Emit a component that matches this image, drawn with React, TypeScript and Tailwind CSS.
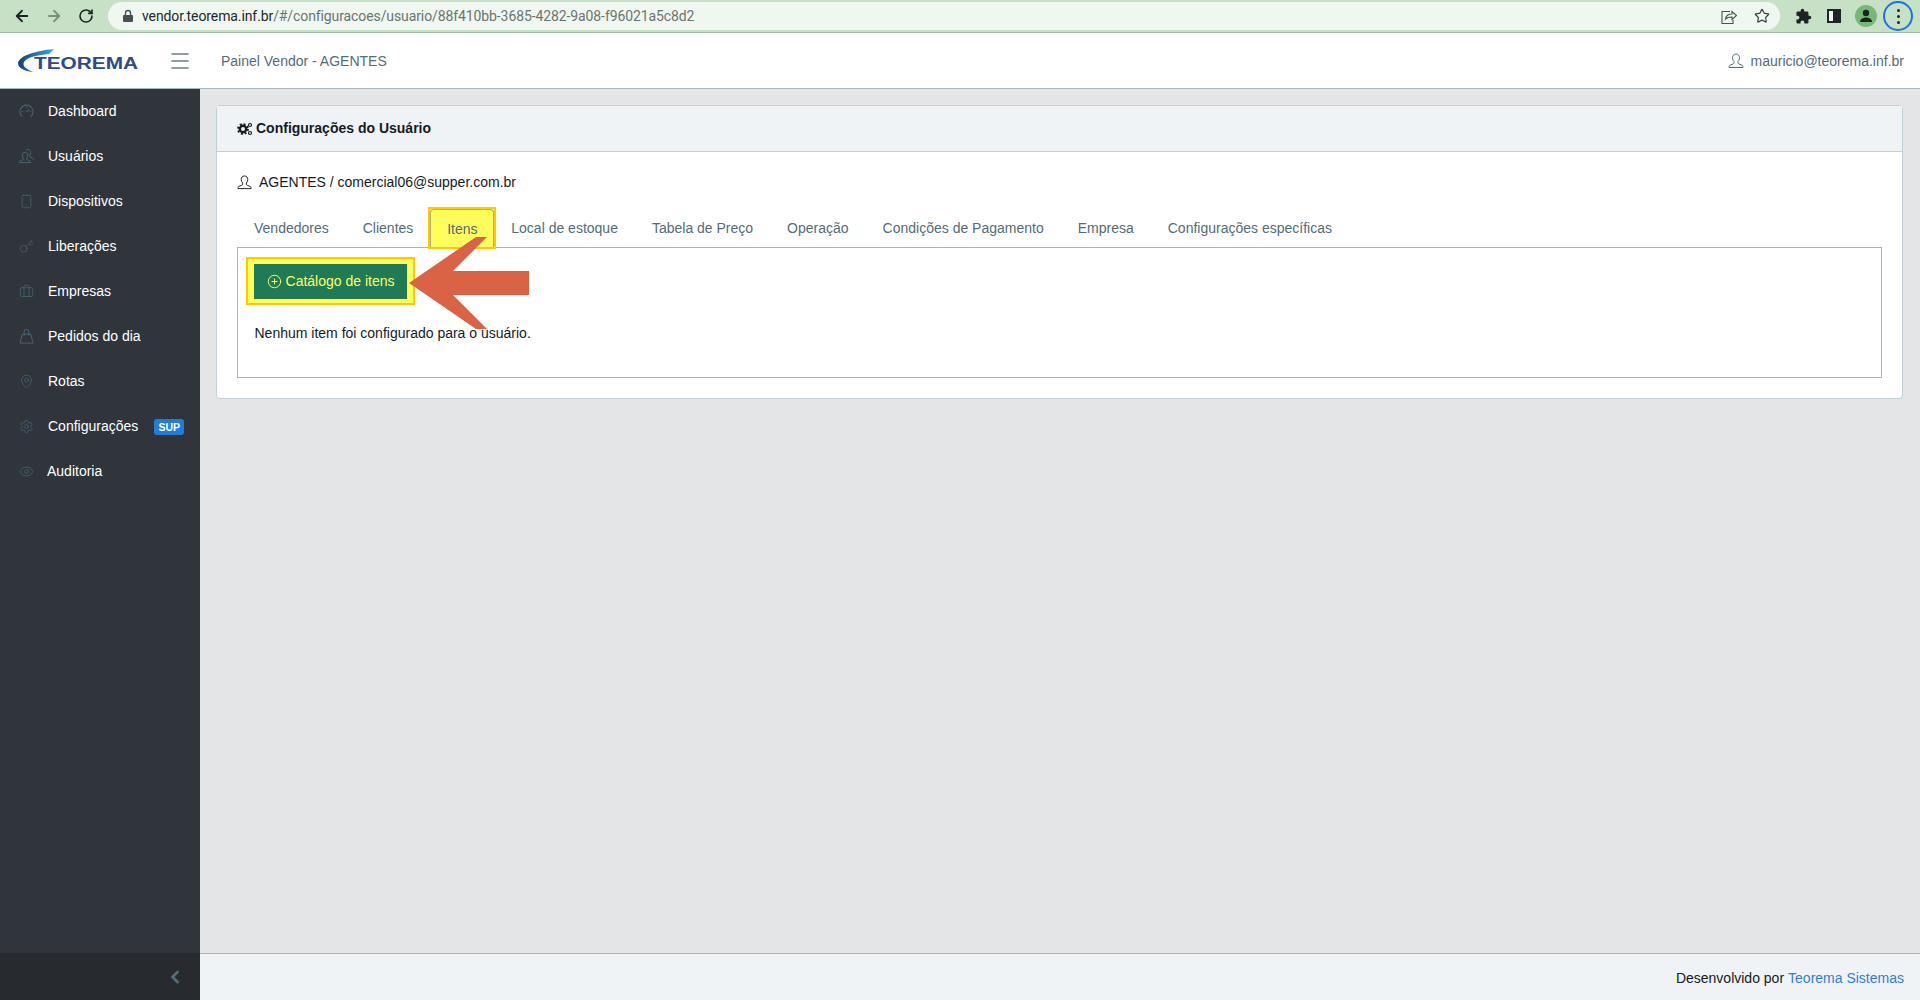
import {
  ArrowLeft,
  ArrowRight,
  Briefcase,
  ChevronLeft,
  Eye,
  Key,
  MapPin,
  Menu,
  PlusCircle,
  RotateCw,
  Settings,
  Smartphone,
  Star,
} from "lucide-react";

const UserLine = ({ size = 15, className = "" }: { size?: number; className?: string }) => (
  <svg width={size} height={size} viewBox="0 0 16 16" fill="none" stroke="currentColor" strokeWidth="1" className={className}>
    <path d="M8 1c-2.200 0-3.500 1.600-3.500 3.800 0 1.500.6 2.900 1.500 3.700v1.300c0 .6-.4 1-1 1.200l-2.700 1c-1 .4-1.300 1-1.300 2.500h14c0-1.500-.3-2.100-1.300-2.500l-2.700-1c-.6-.2-1-.6-1-1.200V8.500c.9-.8 1.500-2.200 1.500-3.700C11.500 2.600 10.200 1 8 1z" />
  </svg>
);

const UsersLine = ({ size = 15, className = "" }: { size?: number; className?: string }) => (
  <svg width={size} height={size} viewBox="0 0 16 16" fill="none" stroke="currentColor" strokeWidth="1" className={className}>
    <path d="M6.500 3.500c-1.800 0-3 1.400-3 3.200 0 1.200.5 2.300 1.200 3v1c0 .5-.3.8-.8 1l-2.200.8c-.9.3-1.200.9-1.200 2h12c0-1.100-.3-1.700-1.200-2l-2.200-.8c-.5-.2-.8-.5-.8-1v-1c.7-.7 1.200-1.800 1.200-3 0-1.800-1.200-3.200-3-3.200z" />
    <path d="M7.500 1.200c.6-.4 1.200-.7 2-.7 1.800 0 3 1.400 3 3.200 0 1.200-.5 2.300-1.200 3v1c0 .5.3.8.8 1l2.200.8c.9.3 1.200.9 1.200 2" />
  </svg>
);

const GaugeLine = ({ size = 15, className = "" }: { size?: number; className?: string }) => (
  <svg width={size} height={size} viewBox="0 0 16 16" fill="none" stroke="currentColor" strokeWidth="1.100" className={className}>
    <path d="M3.500 13.500a7 7 0 1 1 9 0" />
    <path d="M8 8.500l3-2.500" />
    <path d="M8 3v1M3 8h1M12 8h1" />
  </svg>
);

const BagLine = ({ size = 15, className = "" }: { size?: number; className?: string }) => (
  <svg width={size} height={size} viewBox="0 0 16 16" fill="none" stroke="currentColor" strokeWidth="1" className={className}>
    <path d="M3.500 5.500h9L15 15H1z" />
    <path d="M5.500 7V3a2.500 2.500 0 0 1 5 0v4" />
  </svg>
);

const menu = [
  { label: "Dashboard", icon: GaugeLine },
  { label: "Usuários", icon: UsersLine },
  { label: "Dispositivos", icon: Smartphone },
  { label: "Liberações", icon: Key },
  { label: "Empresas", icon: Briefcase },
  { label: "Pedidos do dia", icon: BagLine },
  { label: "Rotas", icon: MapPin },
  { label: "Configurações", icon: Settings, badge: "SUP" },
  { label: "Auditoria", icon: Eye },
];

const tabs = [
  "Vendedores",
  "Clientes",
  "Itens",
  "Local de estoque",
  "Tabela de Preço",
  "Operação",
  "Condições de Pagamento",
  "Empresa",
  "Configurações específicas",
];

// browser chrome at the top of the capture
const BrowserBar = () => (
  <div className="flex h-[33px] shrink-0 items-center border-b border-[#a3bba3] bg-[#c6e1c6]">
    <div className="flex w-[108px] items-center pl-[13px] text-[#1f2326]">
      <ArrowLeft size={18} strokeWidth={2.4} />
      <ArrowRight size={18} strokeWidth={2.4} className="ml-[14px] text-[#7d8f7d]" />
      <RotateCw size={16} strokeWidth={2.4} className="ml-[15px]" />
    </div>
    <div className="flex h-[28px] w-[1672px] items-center rounded-full bg-[#f0f7f0] pl-[14px] pr-[10px]">
      <svg width="12" height="14" viewBox="0 0 12 14" className="text-[#4a4f52]">
        <path d="M2 6h8a1 1 0 0 1 1 1v5a1 1 0 0 1-1 1H2a1 1 0 0 1-1-1V7a1 1 0 0 1 1-1z" fill="currentColor" />
        <path d="M3.500 6V4a2.500 2.500 0 0 1 5 0v2" fill="none" stroke="currentColor" strokeWidth="1.400" />
      </svg>
      <span className="ml-[8px] flex-1 font-['Roboto',sans-serif] text-[14px] tracking-[-0.1px] text-[#6c7470]">
        <span className="text-[#24282b]">vendor.teorema.inf.br</span>
        /#/configuracoes/usuario/88f410bb-3685-4282-9a08-f96021a5c8d2
      </span>
      <svg width="16" height="15" viewBox="0 0 16 15" fill="none" stroke="#4a4f52" strokeWidth="1.100" className="mr-[17px]">
        <path d="M9 2.500H1v12h11V11" />
        <path d="M4.500 10c.5-3.500 3-5 6.500-5V2.500L15.500 6.500 11 10.500V8c-2.800 0-5 .5-6.500 2z" />
      </svg>
      <Star size={16} strokeWidth={1.800} className="text-[#3c4043]" />
    </div>
    <svg width="17" height="17" viewBox="0 0 24 24" className="ml-[15px] text-[#1f2326]">
      <path
        d="M20.500 11H19V7a2 2 0 0 0-2-2h-4V3.500a2.500 2.500 0 0 0-5 0V5H4a2 2 0 0 0-2 2v3.800h1.500a2.700 2.700 0 0 1 0 5.400H2V20a2 2 0 0 0 2 2h3.800v-1.500a2.700 2.700 0 0 1 5.400 0V22H17a2 2 0 0 0 2-2v-4h1.500a2.500 2.500 0 0 0 0-5z"
        fill="currentColor"
      />
    </svg>
    <div className="ml-[15px] flex h-[14px] w-[14px] justify-end border-2 border-[#1f2326] bg-[#f0f7f0]">
      <div className="h-full w-[6px] bg-[#1f2326]" />
    </div>
    <div className="ml-[14px] flex h-[22px] w-[22px] items-center justify-center overflow-hidden rounded-full bg-[#79b779]">
      <svg width="14" height="14" viewBox="0 0 14 14" className="text-[#16261a]">
        <circle cx="7" cy="4" r="3.200" fill="currentColor" />
        <path d="M1 13c0-3 3-4.500 6-4.500s6 1.500 6 4.500z" fill="currentColor" />
      </svg>
    </div>
    <div className="ml-[6px] flex h-[30px] w-[30px] flex-col items-center justify-center gap-[3px] rounded-full border-2 border-[#1a73e8]">
      <div className="h-[3px] w-[3px] rounded-full bg-[#1f2326]" />
      <div className="h-[3px] w-[3px] rounded-full bg-[#1f2326]" />
      <div className="h-[3px] w-[3px] rounded-full bg-[#1f2326]" />
    </div>
  </div>
);

const Logo = () => (
  <div className="relative h-[24px] w-[121px]">
    <svg width="50" height="24" viewBox="0 0 50 24" className="absolute left-0 top-0">
      <defs>
        <linearGradient id="swoosh" x1="0" x2="1" y1="0" y2="0">
          <stop offset="0" stopColor="#17407f" />
          <stop offset="1" stopColor="#35a7e0" />
        </linearGradient>
      </defs>
      <path d="M36 0 C18 2 2 6 0 14 C0 19 6 22 15 23 C8 20 4 17 6 13 C9 8 20 6 31 5 z" fill="url(#swoosh)" />
    </svg>
    <span className="absolute left-[16px] top-[6px] origin-left scale-x-[1.300] font-['Liberation_Sans',sans-serif] text-[16px] font-bold leading-[18px] text-[#2c4a8c]">
      TEOREMA
    </span>
  </div>
);

const TopNav = () => (
  <header className="flex h-[56px] shrink-0 items-center border-b border-[#a4b7c1] bg-white pl-[18px] pr-[16px] text-[14px] text-[#536c79]">
    <Logo />
    <Menu size={24} strokeWidth={1.600} className="ml-[29px] text-[#6b7d88]" />
    <span className="ml-[29px] pt-[1px]">Painel Vendor - AGENTES</span>
    <div className="ml-auto flex items-center gap-[7px] pt-[1px]">
      <UserLine size={16} />
      <span>mauricio@teorema.inf.br</span>
    </div>
  </header>
);

const Sidebar = () => (
  <aside className="flex w-[200px] shrink-0 flex-col bg-[#2f353b] text-[14px] text-white">
    <nav className="flex-1">
      {menu.map((item) => (
        <div key={item.label} className="flex h-[45px] items-center pl-[19px]">
          <item.icon size={15} strokeWidth={1.200} className="text-[#4b6675]" />
          <span className={item.label === "Auditoria" ? "ml-[13px]" : "ml-[14px]"}>{item.label}</span>
          {item.badge && (
            <span className="ml-auto mr-[16px] rounded-[3px] bg-[#1f7fd6] px-[4px] text-[10.500px] font-bold leading-[16px]">
              {item.badge}
            </span>
          )}
        </div>
      ))}
    </nav>
    <div className="flex h-[47px] items-center justify-end bg-[#272b30] pr-[15px] pt-[1px]">
      <ChevronLeft size={20} strokeWidth={3.400} className="text-[#536c79]" />
    </div>
  </aside>
);

const TabBar = () => (
  <div className="relative z-10 flex text-[14px] text-[#536c79]">
    {tabs.map((tab) =>
      tab === "Itens" ? (
        // marca amarela da captura em volta da aba ativa
        <div key={tab} className="-mx-[2px] -mb-[2px] -mt-[1px] h-[42px] border-2 border-[#ffc800] bg-[#ffff5c]">
          <div className="flex h-full items-center rounded-t-[4px] border border-b-0 border-[#a9b070] px-[15.800px] pt-[1px]">
            {tab}
          </div>
        </div>
      ) : (
        <div key={tab} className="flex h-[39px] items-center px-[17px] pt-[2px]">
          {tab}
        </div>
      ),
    )}
  </div>
);

export default function App() {
  return (
    <div className="relative flex h-[1000px] w-[1920px] flex-col overflow-hidden bg-[#e4e5e6] font-['Liberation_Sans',sans-serif] text-[#151b1e]">
      <BrowserBar />
      <TopNav />
      <div className="flex min-h-0 flex-1">
        <Sidebar />
        <div className="flex min-w-0 flex-1 flex-col">
          <main className="flex-1 pl-[16px] pr-[17px] pt-[16px]">
            <section className="rounded-[4px] border border-[#c2cfd6] bg-white">
              <div className="flex h-[46px] items-center gap-[3px] border-b border-[#c2cfd6] bg-[#f0f3f5] pl-[20px] text-[14px] font-bold">
                <svg width="16" height="14" viewBox="0 0 16 14" fill="none" stroke="currentColor">
                  <circle cx="6" cy="7" r="3.200" strokeWidth="2.400" />
                  <circle cx="6" cy="7" r="5" strokeWidth="1.800" strokeDasharray="2 1.930" />
                  <circle cx="13" cy="3" r="1.500" strokeWidth="1.200" />
                  <circle cx="13" cy="11" r="1.500" strokeWidth="1.200" />
                </svg>
                <span>Configurações do Usuário</span>
              </div>
              <div className="px-[20px] pb-[20px] pt-[20px] text-[14px]">
                <div className="flex h-[20px] items-center gap-[7px]">
                  <UserLine size={15} />
                  <span>AGENTES / comercial06@supper.com.br</span>
                </div>
                <div className="mt-[16px]">
                  <TabBar />
                  <div className="border border-[#a4b7c1] px-[16.500px] pb-[33px] pt-[16px]">
                    <div className="-mx-[8.500px] -mt-[7px] flex w-fit border-2 border-[#ffc800] bg-[#ffff5c] px-[6px] pb-[4px] pt-[5px]">
                      <button className="flex h-[35px] w-[153px] items-center justify-center gap-[4px] bg-[#1f7a55] text-[14px] text-[#ffff66]">
                        <PlusCircle size={15} strokeWidth={1.500} />
                        Catálogo de itens
                      </button>
                    </div>
                    <p className="mt-[18px] leading-[21px]">Nenhum item foi configurado para o usuário.</p>
                  </div>
                </div>
              </div>
            </section>
          </main>
          <footer className="flex h-[47px] items-center justify-end border-t border-[#a4b7c1] bg-[#f0f3f5] pr-[16px] pt-[2px] text-[14px]">
            <span>Desenvolvido por</span>
            <span className="ml-[4px] text-[#2f80d8]">Teorema Sistemas</span>
          </footer>
        </div>
      </div>
      {/* seta de destaque sobre o botão */}
      <svg width="120" height="92" viewBox="0 0 120 92" className="absolute left-[409px] top-[237px] z-20">
        <polygon points="0,46 67,0 78,0 44,34 120,34 120,58 44,58 78,92 67,92" fill="#da6345" />
      </svg>
    </div>
  );
}
